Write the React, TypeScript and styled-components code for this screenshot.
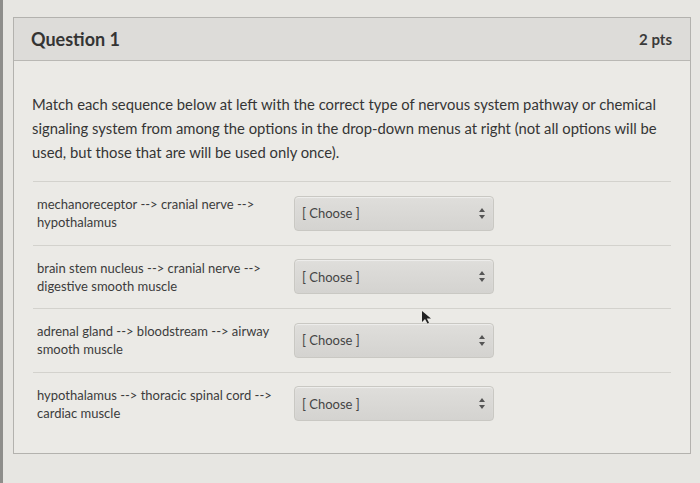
import styled, { createGlobalStyle } from "styled-components";

const Global = createGlobalStyle`
  html, body {
    margin: 0;
    padding: 0;
    background: #e7e6e2;
    font-family: Lato, "Open Sans", sans-serif;
    color: #3b3b3b;
  }
`;

const Screen = styled.div`
  position: relative;
  width: 700px;
  height: 483px;
  box-sizing: border-box;
  padding: 17px 9px 0 10px;
  border-left: 3px solid #8e8e8b;
  background: #e7e6e2;
  overflow: hidden;
`;

const Card = styled.section`
  border: 1px solid #b3b2ae;
  background: #ebeae6;
`;

const Header = styled.header`
  height: 42px;
  display: flex;
  align-items: center;
  justify-content: space-between;
  padding: 0 18px 0 17px;
  background: #dddcd9;
  border-bottom: 1px solid #b9b8b4;
`;

const Title = styled.h2`
  margin: 0;
  font-size: 18px;
  font-weight: 700;
  color: #343434;
`;

const Points = styled.span`
  font-size: 15px;
  font-weight: 700;
  color: #3a3a3a;
`;

const Body = styled.div`
  padding: 31px 19px 18px 18px;
`;

const Prompt = styled.p`
  margin: 0 0 17px;
  font-size: 14.8px;
  line-height: 24px;
  color: #353535;
`;

const Row = styled.div`
  height: 62.5px;
  display: flex;
  align-items: center;
  gap: 9px;
  margin-left: 1px;
  padding-left: 4px;
  border-top: 1px solid #d3d2cd;
`;

const Sequence = styled.div`
  width: 248px;
  font-size: 13px;
  line-height: 18px;
  color: #3c3c3c;
`;

const Select = styled.div`
  width: 200px;
  height: 35px;
  box-sizing: border-box;
  display: flex;
  align-items: center;
  justify-content: space-between;
  padding: 0 8px 0 7px;
  border: 1px solid #c9c8c3;
  border-radius: 4px;
  background: linear-gradient(#dfdedb, #d4d3d0);
  box-shadow: inset 0 1px 1px rgba(255, 255, 255, 0.5);
  font-size: 13px;
  color: #454545;
`;

const Cursor = styled.svg`
  position: absolute;
  left: 418px;
  top: 310px;
`;

const Arrows = () => (
  <svg width="6" height="11" viewBox="0 0 6 11">
    <path d="M3 0 L6 4 L0 4 Z" fill="#555" />
    <path d="M3 11 L6 7 L0 7 Z" fill="#555" />
  </svg>
);

const rows = [
  "mechanoreceptor --> cranial nerve --> hypothalamus",
  "brain stem nucleus --> cranial nerve --> digestive smooth muscle",
  "adrenal gland --> bloodstream --> airway smooth muscle",
  "hypothalamus --> thoracic spinal cord --> cardiac muscle",
];

export default function App() {
  return (
    <Screen>
      <Global />
      <Card>
        <Header>
          <Title>Question 1</Title>
          <Points>2 pts</Points>
        </Header>
        <Body>
          <Prompt>
            Match each sequence below at left with the correct type of nervous
            system pathway or chemical signaling system from among the options
            in the drop-down menus at right (not all options will be used, but
            those that are will be used only once).
          </Prompt>
          {rows.map((r) => (
            <Row key={r}>
              <Sequence>{r}</Sequence>
              <Select>
                <span>[ Choose ]</span>
                <Arrows />
              </Select>
            </Row>
          ))}
        </Body>
      </Card>
      <Cursor width="12" height="14" viewBox="0 0 12 14">
        <path d="M1 1 L1 12 L4 9 L6.5 13.5 L8 12.8 L5.8 8.5 L10 8.5 Z" fill="#222" />
      </Cursor>
    </Screen>
  );
}
